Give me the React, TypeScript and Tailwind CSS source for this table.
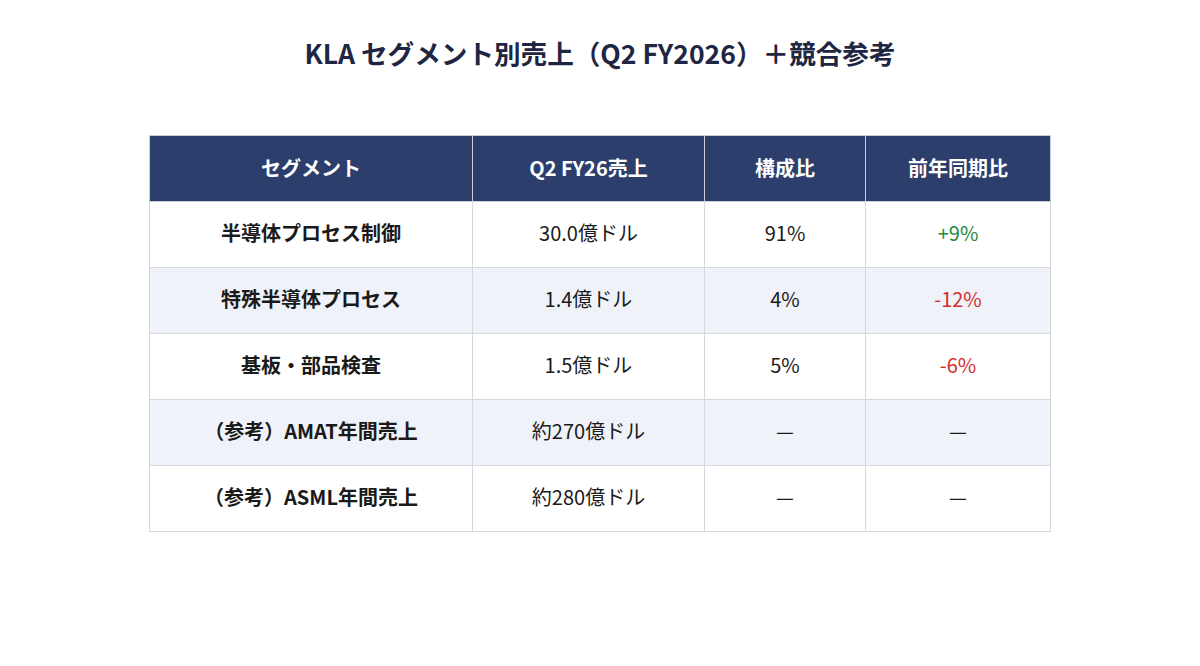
const rows = [
  { name: "半導体プロセス制御", sales: "30.0億ドル", share: "91%", yoy: "+9%", tone: "up" },
  { name: "特殊半導体プロセス", sales: "1.4億ドル", share: "4%", yoy: "-12%", tone: "down" },
  { name: "基板・部品検査", sales: "1.5億ドル", share: "5%", yoy: "-6%", tone: "down" },
  { name: "（参考）AMAT年間売上", sales: "約270億ドル", share: "—", yoy: "—", tone: "none" },
  { name: "（参考）ASML年間売上", sales: "約280億ドル", share: "—", yoy: "—", tone: "none" },
];

const headers = ["セグメント", "Q2 FY26売上", "構成比", "前年同期比"];
const widths = ["w-[323px]", "w-[232px]", "w-[161px]", "w-[185px]"];

export default function App() {
  return (
    <div
      className="h-[666px] w-[1200px] bg-white text-[#1a1a1a]"
      style={{ fontFamily: '"Noto Sans CJK JP", "Noto Sans", sans-serif' }}
    >
      <h1 className="pt-[33px] text-center text-[26.6px] font-bold leading-[40px] text-[#1e2642]">
        KLA セグメント別売上（Q2 FY2026）＋競合参考
      </h1>
      <div className="mt-[62px] flex justify-center">
        <table className="w-[902px] table-fixed border-collapse text-[20px]">
          <colgroup>
            {widths.map((w, i) => (
              <col key={i} className={w} />
            ))}
          </colgroup>
          <thead>
            <tr className="h-[66px] bg-[#2c3e6b] text-white">
              {headers.map((h) => (
                <th key={h} className="border border-[#c9ced6] pb-[2px] text-center font-bold">
                  {h}
                </th>
              ))}
            </tr>
          </thead>
          <tbody>
            {rows.map((r, i) => (
              <tr key={r.name} className={`h-[66px] ${i % 2 === 1 ? "bg-[#eff2f8]" : "bg-white"}`}>
                <td className="border border-[#d5d8de] pb-[3px] text-center font-bold">{r.name}</td>
                <td className="border border-[#d5d8de] pb-[3px] text-center">{r.sales}</td>
                <td className="border border-[#d5d8de] pb-[3px] text-center">{r.share}</td>
                <td
                  className={`border border-[#d5d8de] pb-[3px] text-center ${
                    r.tone === "up" ? "text-[#1e8a3c]" : r.tone === "down" ? "text-[#d32f2f]" : ""
                  }`}
                >
                  {r.yoy}
                </td>
              </tr>
            ))}
          </tbody>
        </table>
      </div>
    </div>
  );
}
